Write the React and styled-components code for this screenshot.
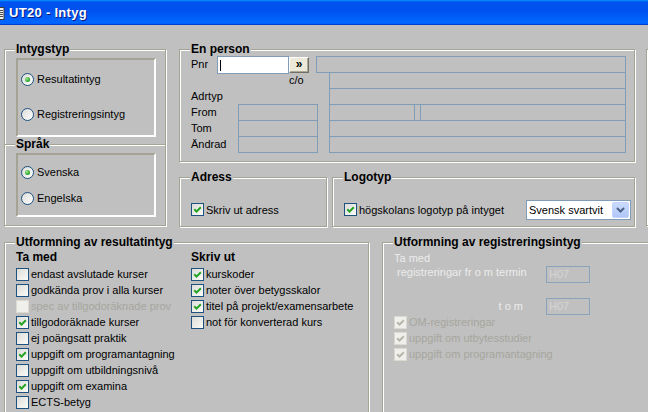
import React from 'react'
import styled, { createGlobalStyle } from 'styled-components'

const ETCH = '#a5a393'
const FIELD = '#7f9db9'

const GlobalStyle = createGlobalStyle`
  html, body { margin: 0; padding: 0; background: #c0c0c0; }
  *, *::before, *::after { box-sizing: border-box; }
`

const Window = styled.div`
  width: 648px;
  height: 412px;
  overflow: hidden;
  background: #c0c0c0;
  font-family: "Liberation Sans", Arial, sans-serif;
  font-size: 11px;
  color: #000;
`

const TitleBar = styled.div`
  height: 25px;
  display: flex;
  align-items: center;
  gap: 4px;
  padding-bottom: 1px;
  background: linear-gradient(180deg, #0997ff, #0053ee 8%, #0050ee 40%, #0066ff 88%, #0066ff 93%, #005bff 95%, #003dd7 96%, #003dd7);
  color: #fff;
  font-weight: bold;
  font-size: 13px;
  letter-spacing: 0.3px;
  text-shadow: 1px 1px 0 #0a1883;
`

const Body = styled.div`
  display: flex;
  flex-direction: column;
  gap: 15px;
  padding: 24px 0 0 4px;
`

const Row = styled.div`
  display: flex;
  align-items: flex-start;
  gap: ${p => p.$gap ?? 13}px;
`

const Column = styled.div`
  display: flex;
  flex-direction: column;
  gap: 15px;
`

const Group = styled.div`
  position: relative;
  flex: none;
  width: ${p => p.$w}px;
  height: ${p => p.$h}px;
  border: 1px solid ${ETCH};
  box-shadow: inset 1px 1px 0 #fff, 1px 1px 0 #fff;
`

// the next group box, cut off by the window's right edge
const EdgeGroup = styled(Group)`
  margin-left: -2px;
`

const Caption = styled.span`
  position: absolute;
  top: -8px;
  left: 10px;
  padding: 0 1px;
  background: #c0c0c0;
  font-size: 12px;
  font-weight: bold;
  line-height: 14px;
  white-space: nowrap;
`

/* left column: Intygstyp / Språk */
const OptionSection = styled.div`
  position: relative;
  padding: 8px 9px ${p => (p.$divider ? 8 : 7)}px 11px;
  ${p => p.$divider && `border-top: 1px solid ${ETCH}; box-shadow: inset 0 1px 0 #fff;`}
`

const Panel = styled.div`
  width: 140px;
  height: ${p => p.$h}px;
  border: 2px solid;
  border-color: ${ETCH} #fff #fff ${ETCH};
  display: flex;
  flex-direction: column;
  gap: ${p => p.$gap}px;
  padding: ${p => p.$top}px 0 0 3px;
`

const RadioRow = styled.label`
  display: flex;
  align-items: center;
  gap: 3px;
  height: 16px;
  white-space: nowrap;
`

const RadioDot = styled.span`
  flex: none;
  width: 13px;
  height: 13px;
  border-radius: 50%;
  border: 1px solid #1c5180;
  background: linear-gradient(135deg, #dcdcd7, #ffffff);
  display: flex;
  align-items: center;
  justify-content: center;
  &::after {
    content: '';
    width: 5px;
    height: 5px;
    border-radius: 50%;
    background: ${p => (p.$on ? 'radial-gradient(circle at 35% 35%, #9fe896, #1f9f1f 70%)' : 'transparent')};
  }
`

/* checkbox */
const TickBox = styled.span`
  flex: none;
  width: 13px;
  height: 13px;
  border: 1px solid ${p => (p.$disabled ? '#dcdad0' : '#1c5180')};
  background: ${p => (p.$disabled ? '#efefeb' : 'linear-gradient(135deg, #dcdcd7, #fbfbf9)')};
  display: flex;
  align-items: center;
  justify-content: center;
`

const CheckRow = styled.label`
  display: flex;
  align-items: center;
  gap: 2px;
  height: 16px;
  white-space: nowrap;
  color: ${p => (p.$disabled ? '#a6a69e' : '#000')};
`

function Check({ checked, disabled, children }) {
  return (
    <CheckRow $disabled={disabled}>
      <TickBox $disabled={disabled}>
        {checked && (
          <svg width="9" height="9" viewBox="0 0 9 9">
            <path d="M1.3 4.3 L3.5 6.6 L7.8 2.2" fill="none" stroke={disabled ? '#b7b5aa' : '#21a121'} strokeWidth="2" />
          </svg>
        )}
      </TickBox>
      {children}
    </CheckRow>
  )
}

function Radio({ on, children }) {
  return (
    <RadioRow>
      <RadioDot $on={on} />
      {children}
    </RadioRow>
  )
}

/* En person */
const PersonGroup = styled(Group)`
  display: flex;
  padding: 6px 8px 0 11px;
`

const PersonFields = styled.div`
  width: 125px;
  flex: none;
  display: grid;
  grid-template-rows: repeat(6, 16px);
`

const FieldRow = styled.div`
  display: flex;
  align-items: center;
  white-space: nowrap;
`

const FieldLabel = styled.span`
  flex: none;
  width: ${p => p.$w}px;
`

const PnrInput = styled.div`
  flex: none;
  align-self: flex-start;
  width: 72px;
  height: 18px;
  background: #fff;
  border: 1px solid ${FIELD};
  padding: 3px 0 0 2px;
`

const Caret = styled.span`
  display: block;
  width: 1px;
  height: 11px;
  background: #000;
`

const GoButton = styled.button`
  flex: none;
  align-self: flex-start;
  width: 20px;
  height: 16px;
  margin-top: 1px;
  padding: 0 0 2px;
  background: #ece9d8;
  border: 1px solid;
  border-color: #fff #716f64 #716f64 #fff;
  box-shadow: inset -1px -1px 0 #aca899;
  font-family: "Liberation Sans", Arial, sans-serif;
  font-size: 12px;
  font-weight: bold;
  line-height: 12px;
  color: #000;
`

const Co = styled.span`
  padding-left: 98px;
`

const FieldBox = styled.div`
  flex: none;
  align-self: flex-start;
  width: ${p => p.$w}px;
  height: 17px;
  border: 1px solid ${FIELD};
  margin-left: ${p => p.$ml ?? 0}px;
`

const PersonBoxes = styled.div`
  width: 310px;
  flex: none;
  display: flex;
  flex-direction: column;
`

const BoxStack = styled.div`
  margin: -1px 0 0 13px;
  display: flex;
  flex-direction: column;
`

const BoxLine = styled.div`
  display: flex;
  & + & {
    margin-top: -1px;
  }
`

/* Adress / Logotyp */
const OptionGroup = styled(Group)`
  display: flex;
  align-items: center;
  height: 50px;
  padding: 21px 3px 6px 11px;
`

const Select = styled.div`
  margin-left: auto;
  width: 105px;
  height: 20px;
  background: #fff;
  border: 1px solid ${FIELD};
  display: flex;
  align-items: center;
  padding: 0 1px 0 2px;
`

const SelectText = styled.span`
  flex: 1;
  white-space: nowrap;
`

const DropButton = styled.span`
  flex: none;
  width: 17px;
  height: 16px;
  border: 1px solid #c3d3fd;
  border-radius: 2px;
  background: linear-gradient(#c9dafd, #b1c7f6);
  display: flex;
  align-items: center;
  justify-content: center;
`

/* Utformning */
const ResultGroup = styled(Group)`
  display: flex;
  padding: 6px 0 0 11px;
`

const CheckColumn = styled.div`
  display: flex;
  flex-direction: column;
  width: ${p => (p.$w ? `${p.$w}px` : 'auto')};
  flex: none;
`

const SubHeading = styled.div`
  font-size: 12px;
  font-weight: bold;
  line-height: 17px;
  height: 17px;
`

const RegGroup = styled(Group)`
  display: flex;
  flex-direction: column;
  padding: 7px 0 0 11px;
`

const Faint = styled.div`
  color: #ececec;
  line-height: 16px;
  height: 16px;
`

const TermRow = styled.div`
  display: flex;
  align-items: ${p => (p.$center ? 'center' : 'flex-start')};
  margin-top: ${p => p.$mt ?? 0}px;
`

const TermLabel = styled.span`
  width: 152px;
  flex: none;
  color: #ececec;
  line-height: 13px;
  white-space: nowrap;
  text-align: ${p => (p.$right ? 'right' : 'left')};
  padding: ${p => (p.$right ? '0 23px 0 0' : '0 0 0 3px')};
`

const TermBox = styled.div`
  width: 44px;
  height: 17px;
  border: 1px solid #8aa2bb;
  color: #d6d6d6;
  line-height: 15px;
  padding-left: 2px;
`

const CheckList = styled.div`
  display: flex;
  flex-direction: column;
  margin-top: -1px;
`

export default function App() {
  return (
    <Window>
      <GlobalStyle />
      <TitleBar>
        <svg width="5" height="16" viewBox="0 0 5 16">
          <rect x="-4" y="3.5" width="8" height="12" fill="#f2f2ee" stroke="#3c3c3c" />
          <path d="M-2 6.5h5M-2 8.5h5M-2 10.5h5M-2 12.5h5" stroke="#4a4a4a" />
        </svg>
        UT20 - Intyg
      </TitleBar>
      <Body>
        <Row>
          <Group $w={162} $h={177}>
            <OptionSection>
              <Caption>Intygstyp</Caption>
              <Panel $h={79} $top={11} $gap={19}>
                <Radio on>Resultatintyg</Radio>
                <Radio>Registreringsintyg</Radio>
              </Panel>
            </OptionSection>
            <OptionSection $divider>
              <Caption>Språk</Caption>
              <Panel $h={64} $top={9} $gap={10}>
                <Radio on>Svenska</Radio>
                <Radio>Engelska</Radio>
              </Panel>
            </OptionSection>
          </Group>

          <Column>
            <PersonGroup $w={456} $h={113}>
              <Caption>En person</Caption>
              <PersonFields>
                <FieldRow>
                  <FieldLabel $w={26}>Pnr</FieldLabel>
                  <PnrInput><Caret /></PnrInput>
                  <GoButton>»</GoButton>
                </FieldRow>
                <FieldRow><Co>c/o</Co></FieldRow>
                <FieldRow>Adrtyp</FieldRow>
                <FieldRow>
                  <FieldLabel $w={47}>From</FieldLabel>
                  <FieldBox $w={80} />
                </FieldRow>
                <FieldRow>
                  <FieldLabel $w={47}>Tom</FieldLabel>
                  <FieldBox $w={80} />
                </FieldRow>
                <FieldRow>
                  <FieldLabel $w={47}>Ändrad</FieldLabel>
                  <FieldBox $w={80} />
                </FieldRow>
              </PersonFields>
              <PersonBoxes>
                <FieldBox $w={310} />
                <BoxStack>
                  <BoxLine><FieldBox $w={297} /></BoxLine>
                  <BoxLine><FieldBox $w={297} /></BoxLine>
                  <BoxLine>
                    <FieldBox $w={86} />
                    <FieldBox $w={7} $ml={-1} />
                    <FieldBox $w={206} $ml={-1} />
                  </BoxLine>
                  <BoxLine><FieldBox $w={297} /></BoxLine>
                  <BoxLine><FieldBox $w={297} /></BoxLine>
                </BoxStack>
              </PersonBoxes>
            </PersonGroup>

            <Row $gap={5}>
              <OptionGroup $w={148}>
                <Caption>Adress</Caption>
                <Check checked>Skriv ut adress</Check>
              </OptionGroup>
              <OptionGroup $w={303}>
                <Caption>Logotyp</Caption>
                <Check checked>högskolans logotyp på intyget</Check>
                <Select>
                  <SelectText>Svensk svartvit</SelectText>
                  <DropButton>
                    <svg width="9" height="6" viewBox="0 0 9 6">
                      <path d="M1 1 L4.5 4.5 L8 1" fill="none" stroke="#4d6185" strokeWidth="2" />
                    </svg>
                  </DropButton>
                </Select>
              </OptionGroup>
            </Row>
          </Column>

          <EdgeGroup $w={60} $h={177} />
        </Row>

        <Row>
          <ResultGroup $w={365} $h={180}>
            <Caption>Utformning av resultatintyg</Caption>
            <CheckColumn $w={175}>
              <SubHeading>Ta med</SubHeading>
              <Check>endast avslutade kurser</Check>
              <Check>godkända prov i alla kurser</Check>
              <Check disabled>spec av tillgodoräknade prov</Check>
              <Check checked>tillgodoräknade kurser</Check>
              <Check>ej poängsatt praktik</Check>
              <Check checked>uppgift om programantagning</Check>
              <Check>uppgift om utbildningsnivå</Check>
              <Check checked>uppgift om examina</Check>
              <Check>ECTS-betyg</Check>
            </CheckColumn>
            <CheckColumn>
              <SubHeading>Skriv ut</SubHeading>
              <Check checked>kurskoder</Check>
              <Check checked>noter över betygsskalor</Check>
              <Check checked>titel på projekt/examensarbete</Check>
              <Check>not för konverterad kurs</Check>
            </CheckColumn>
          </ResultGroup>

          <RegGroup $w={270} $h={180}>
            <Caption>Utformning av registreringsintyg</Caption>
            <Faint>Ta med</Faint>
            <TermRow>
              <TermLabel>registreringar fr o m termin</TermLabel>
              <TermBox>H07</TermBox>
            </TermRow>
            <TermRow $center $mt={15}>
              <TermLabel $right>t o m</TermLabel>
              <TermBox>H07</TermBox>
            </TermRow>
            <CheckList>
              <Check checked disabled>OM-registreringar</Check>
              <Check checked disabled>uppgift om utbytesstudier</Check>
              <Check checked disabled>uppgift om programantagning</Check>
            </CheckList>
          </RegGroup>
        </Row>
      </Body>
    </Window>
  )
}
